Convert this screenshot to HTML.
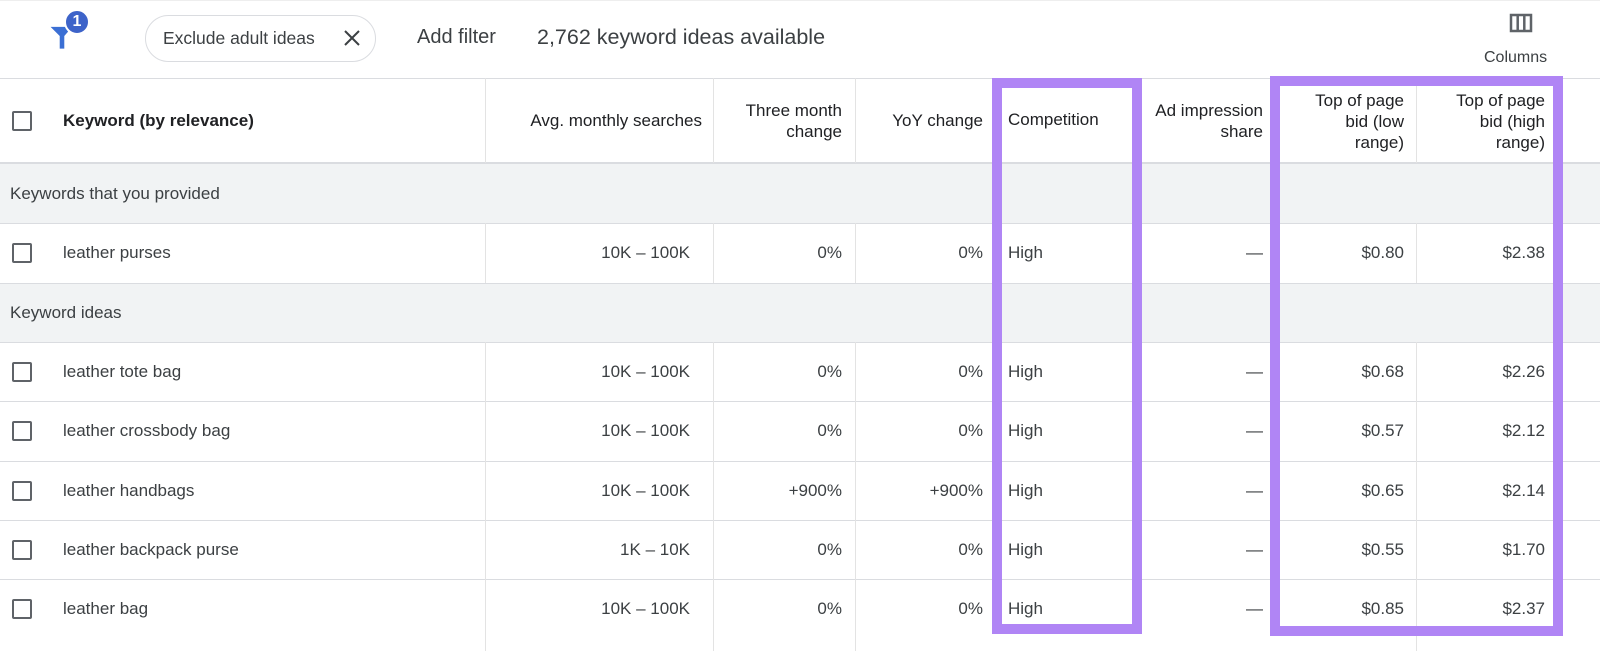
<!DOCTYPE html>
<html><head><style>
*{margin:0;padding:0;box-sizing:border-box}
body{width:1600px;height:651px;background:#fff;font-family:"Liberation Sans",Arial,sans-serif;color:#3c4043;position:relative;overflow:hidden}
.abs{position:absolute}
.hl{position:absolute;left:0;width:1600px;height:1px;background:#dadce0}
.grp{position:absolute;left:0;width:1600px;background:#f1f3f4}
.vl{position:absolute;width:1px;background:#e3e3e3}
.t{position:absolute;font-size:17px;white-space:nowrap;color:#3c4043}
.r{text-align:right}
.h{font-size:17px;font-weight:bold;color:#202124;line-height:21px}
.hr{font-size:17px;color:#202124;line-height:21px;text-align:right}
.cb{position:absolute;left:12px;width:20px;height:20px;border:2px solid #5f6368;border-radius:2px}
.box{position:absolute;border:10px solid #b085f5}
</style></head><body>
<div class="hl" style="top:0;background:#eee"></div>
<svg class="abs" style="left:48px;top:20px" width="28" height="32" viewBox="0 0 24 28"><path d="M2 6h19l-7 8v11h-4V14z" fill="#3b6fd4"/></svg>
<div class="abs" style="left:64px;top:9px;width:26px;height:26px;border-radius:50%;background:#3d63c9;color:#fff;font-size:16px;font-weight:bold;text-align:center;line-height:22px;border:2px solid #fff">1</div>
<div class="abs" style="left:145px;top:15px;width:231px;height:47px;border:1px solid #dadce0;border-radius:24px"></div>
<div class="t" style="left:163px;top:28px;font-size:17.5px">Exclude adult ideas</div>
<svg class="abs" style="left:343px;top:29px" width="18" height="18" viewBox="0 0 18 18"><path d="M2 2L16 16M16 2L2 16" stroke="#3c4043" stroke-width="2"/></svg>
<div class="t" style="left:417px;top:26px;font-size:20px">Add filter</div>
<div class="t" style="left:537px;top:25px;font-size:21.5px">2,762 keyword ideas available</div>
<svg class="abs" style="left:1509px;top:13px" width="24" height="20" viewBox="0 0 24 20"><path d="M2 2h20v16H2zM8.7 2v16M15.3 2v16" fill="none" stroke="#5f6368" stroke-width="2.5"/></svg>
<div class="t" style="left:1484px;top:49px;font-size:16px">Columns</div>
<div class="hl" style="top:78px"></div>
<div class="grp" style="top:163px;height:60px"></div>
<div class="grp" style="top:283px;height:59px"></div>
<div class="hl" style="top:162px;height:2px"></div>
<div class="hl" style="top:223px"></div>
<div class="hl" style="top:283px"></div>
<div class="hl" style="top:342px"></div>
<div class="hl" style="top:401px"></div>
<div class="hl" style="top:461px"></div>
<div class="hl" style="top:520px"></div>
<div class="hl" style="top:579px"></div>
<div class="vl" style="left:485px;top:78px;height:85px"></div><div class="vl" style="left:713px;top:78px;height:85px"></div><div class="vl" style="left:855px;top:78px;height:85px"></div><div class="vl" style="left:1416px;top:78px;height:85px"></div>
<div class="vl" style="left:485px;top:223px;height:60px"></div><div class="vl" style="left:713px;top:223px;height:60px"></div><div class="vl" style="left:855px;top:223px;height:60px"></div><div class="vl" style="left:1416px;top:223px;height:60px"></div>
<div class="vl" style="left:485px;top:342px;height:309px"></div><div class="vl" style="left:713px;top:342px;height:309px"></div><div class="vl" style="left:855px;top:342px;height:309px"></div><div class="vl" style="left:1416px;top:342px;height:309px"></div>
<div class="cb" style="top:111px"></div>
<div class="t h" style="left:63px;top:110px">Keyword (by relevance)</div>
<div class="t hr" style="right:898px;top:110px">Avg. monthly searches</div>
<div class="t hr" style="right:758px;top:100px">Three month<br>change</div>
<div class="t hr" style="right:617px;top:110px">YoY change</div>
<div class="t" style="left:1008px;top:110px;font-size:17px;color:#202124">Competition</div>
<div class="t hr" style="right:337px;top:100px">Ad impression<br>share</div>
<div class="t hr" style="right:196px;top:90px">Top of page<br>bid (low<br>range)</div>
<div class="t hr" style="right:55px;top:90px">Top of page<br>bid (high<br>range)</div>
<div class="t" style="left:10px;top:184px">Keywords that you provided</div>
<div class="t" style="left:10px;top:303px">Keyword ideas</div>
<div id="rows"></div>
<script>
var rows=[[253,"leather purses","10K – 100K","0%","0%","$0.80","$2.38"],
[372,"leather tote bag","10K – 100K","0%","0%","$0.68","$2.26"],
[431,"leather crossbody bag","10K – 100K","0%","0%","$0.57","$2.12"],
[491,"leather handbags","10K – 100K","+900%","+900%","$0.65","$2.14"],
[550,"leather backpack purse","1K – 10K","0%","0%","$0.55","$1.70"],
[609,"leather bag","10K – 100K","0%","0%","$0.85","$2.37"]];
var h="";rows.forEach(function(r){var y=r[0];
h+='<div class="cb" style="top:'+(y-10)+'px"></div>';
h+='<div class="t" style="left:63px;top:'+(y-10)+'px">'+r[1]+'</div>';
h+='<div class="t r" style="right:910px;top:'+(y-10)+'px">'+r[2]+'</div>';
h+='<div class="t r" style="right:758px;top:'+(y-10)+'px">'+r[3]+'</div>';
h+='<div class="t r" style="right:617px;top:'+(y-10)+'px">'+r[4]+'</div>';
h+='<div class="t" style="left:1008px;top:'+(y-10)+'px">High</div>';
h+='<div class="t r" style="right:337px;top:'+(y-10)+'px">—</div>';
h+='<div class="t r" style="right:196px;top:'+(y-10)+'px">'+r[5]+'</div>';
h+='<div class="t r" style="right:55px;top:'+(y-10)+'px">'+r[6]+'</div>';});
document.getElementById("rows").innerHTML=h;
</script>
<div class="box" style="left:992px;top:78px;width:150px;height:556px"></div>
<div class="box" style="left:1270px;top:76px;width:293px;height:560px"></div>
</body></html>
